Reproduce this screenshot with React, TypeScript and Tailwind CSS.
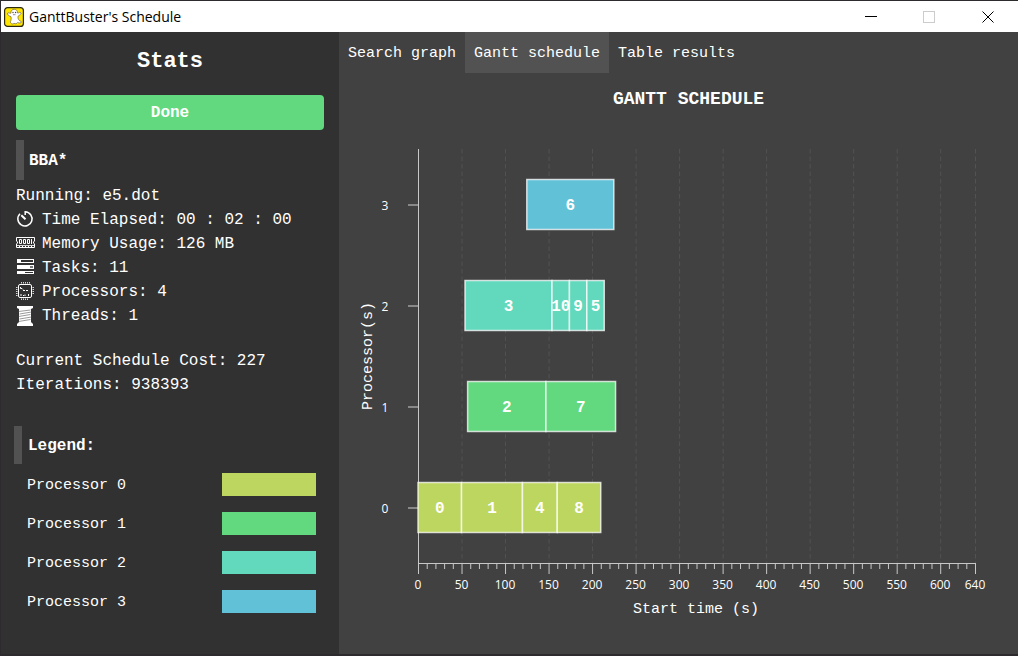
import React from "react";

const processors = [
  { id: 0, fill: "#bdd65f", swatch: "bg-[#bdd65f]" },
  { id: 1, fill: "#62d87f", swatch: "bg-[#62d87f]" },
  { id: 2, fill: "#62d8bc", swatch: "bg-[#62d8bc]" },
  { id: 3, fill: "#61c2d7", swatch: "bg-[#61c2d7]" },
];

const tasks = [
  { id: 0, proc: 0, start: 0, length: 50 },
  { id: 1, proc: 0, start: 50, length: 70 },
  { id: 4, proc: 0, start: 120, length: 40 },
  { id: 8, proc: 0, start: 160, length: 50 },
  { id: 2, proc: 1, start: 57, length: 90 },
  { id: 7, proc: 1, start: 147, length: 80 },
  { id: 3, proc: 2, start: 54, length: 100 },
  { id: 10, proc: 2, start: 154, length: 20 },
  { id: 9, proc: 2, start: 174, length: 20 },
  { id: 5, proc: 2, start: 194, length: 20 },
  { id: 6, proc: 3, start: 125, length: 100 },
];

const LEFT = 79;
const TOP = 33;
const BOTTOM = 447;
const WIDTH = 557;
const MAX = 640;
const scaleX = (t: number) => LEFT + (t / MAX) * WIDTH;
const scaleY = (p: number) => 391 - p * 101;

const major = [0, 50, 100, 150, 200, 250, 300, 350, 400, 450, 500, 550, 600, 640];
const minor = Array.from({ length: 65 }, (_, i) => i * 10).filter((t) => !major.includes(t));

function GhostIcon() {
  return (
    <svg viewBox="0 0 20 20" className="size-5" aria-hidden="true">
      <rect x="0.6" y="0.6" width="18.8" height="18.8" rx="3" fill="#ffe600" stroke="#2c2810" strokeWidth="1.2" />
      <path
        d="M6.8 6.3C6.8 3.7 8.2 2.3 10.2 2.3s3.4 1.4 3.4 3.7c1.1.2 1.7-1 2.8-.6 1.3.6.7 2-2.4 3.9-.1 2 .3 3.2 1.3 4.1.9.8 2.2.7 2.1 1.7-.2 1.2-2.3 1.2-3.7.3-1 1.4-2.4 1.9-3.6.9-1.2 1-2.7.8-3.4-.3-.6-1-.2-1.8.2-2.6.4-1.3.3-2.500.1-3.700C4.600 8.800 3 7.400 3.500 6.200c.6-1.100 2 .2 3.300.1z"
        fill="#ffffff"
        stroke="#7d7140"
        strokeWidth="0.8"
      />
      <circle cx="9" cy="5.5" r="0.7" fill="#444" />
      <circle cx="11.6" cy="5.5" r="0.7" fill="#444" />
      <path d="M9 7.700h2.500" stroke="#777" strokeWidth="0.8" />
    </svg>
  );
}

function TimerIcon() {
  return (
    <svg viewBox="0 0 18 18" className="size-[18px]" fill="none" stroke="white" strokeWidth="1.5">
      <path d="M9.200 5V1.800A7.100 7.100 0 1 1 4 3.800" />
      <path d="M5.300 5.300L9.500 9.300" strokeWidth="2" />
    </svg>
  );
}

function MemoryIcon() {
  return (
    <svg viewBox="0 0 19 18" className="h-[18px] w-[19px]" fill="none" stroke="white">
      <path d="M.5 3.500h18v3.500l-1 1v1l1 1v3.500H.5V10l1-1V8l-1-1z" />
      <path d="M3.500 5.500h2v4h-2zM7.500 5.500h2v4h-2zM11.500 5.500h2v4h-2zM15.500 5v5" />
      <path d="M1 11.500h17" strokeWidth=".8" />
      <path d="M3.500 12v2M6.500 12v2M9.500 12v2M12.500 12v2M15.500 12v2" />
    </svg>
  );
}

function TasksIcon() {
  return (
    <svg viewBox="0 0 18 18" className="size-[18px]">
      <path fill="white" d="M1 1h17v4H1zM1 7h17v4H1zM1 13h17v3H1z" />
      <path fill="#313131" d="M5 2h12v2H5zM9 14h8v1H9z" />
      <path fill="#777" d="M14 8h3v2h-3z" />
    </svg>
  );
}

function ChipIcon() {
  return (
    <svg viewBox="0 0 18 18" className="size-[18px]" fill="none" stroke="white">
      <rect x="2.5" y="2.5" width="13" height="13" rx="1.5" />
      <path d="M5.500 0v1.500M7.500 0v1.500M9.500 0v1.500M11.500 0v1.500M13.500 0v1.500M5.500 16.500V18M7.500 16.500V18M9.500 16.500V18M11.500 16.500V18M0 5.500h1.500M0 7.500h1.500M0 9.500h1.500M0 11.500h1.500M0 13.500h1.500M16.500 5.500H18M16.500 7.500H18M16.500 9.500H18M16.500 11.500H18" strokeWidth=".8" />
      <path d="M4.500 5v1.500H6l1 1M7 8.500h2M10 8.500h2M5 14v-2M7.500 14v-1M9 14v-1.500M12.500 14v-2" />
    </svg>
  );
}

function ThreadIcon() {
  return (
    <svg viewBox="0 0 18 20" className="h-5 w-[18px]">
      <path fill="white" d="M1 0h16v2l-2 1H3L1 2zM3 16h12l2 2v2H1v-2zM3 3h12v14H3z" />
      <path d="M2.500 5.500l12-1.500M3.500 8l12-2M2.500 10.500l12-2M3.500 13l12-2M2.500 15.500l12-2" stroke="#555" strokeWidth=".6" />
    </svg>
  );
}

const stats = [
  { label: "Time Elapsed: 00 : 02 : 00", Icon: TimerIcon },
  { label: "Memory Usage: 126 MB", Icon: MemoryIcon },
  { label: "Tasks: 11", Icon: TasksIcon },
  { label: "Processors: 4", Icon: ChipIcon },
  { label: "Threads: 1", Icon: ThreadIcon },
];

function TitleBar() {
  return (
    <header className="flex h-[31px] shrink-0 items-center bg-white pl-[3px] font-['Open_Sans',sans-serif] text-black">
      <GhostIcon />
      <span className="ml-[5px] grow text-sm">GanttBuster's Schedule</span>
      <button aria-label="Minimize" className="flex h-full w-[58px] items-center justify-center">
        <svg viewBox="0 0 12 12" className="size-3" stroke="black"><path d="M0 5.500h12" /></svg>
      </button>
      <button aria-label="Maximize" disabled className="flex h-full w-[58px] items-center justify-center">
        <svg viewBox="0 0 12 12" className="size-3" fill="none" stroke="#cccccc"><rect x="0.5" y="0.5" width="11" height="11" /></svg>
      </button>
      <button aria-label="Close" className="flex h-full w-[60px] items-center justify-center">
        <svg viewBox="0 0 12 12" className="size-3" stroke="black"><path d="M.5 .500l11 11M11.500 .500l-11 11" /></svg>
      </button>
    </header>
  );
}

function Sidebar() {
  return (
    <aside className="w-[338px] shrink-0 bg-[#313131] px-[15px] pt-[14px]">
      <h1 className="text-center text-[22px] leading-8 font-bold">Stats</h1>
      <button className="mt-[17px] block h-[35px] w-full rounded bg-[#62d87f] text-base font-bold">Done</button>
      <h2 className="mt-[10px] flex h-10 items-center border-l-8 border-[#525252] pt-0.5 pl-[5px] text-base font-bold">BBA*</h2>
      <p className="mt-1 leading-6">Running: e5.dot</p>
      <ul>
        {stats.map(({ label, Icon }) => (
          <li key={label} className="flex h-6 items-center gap-[7px]">
            <span className="flex h-5 w-[19px]" aria-hidden="true"><Icon /></span>
            {label}
          </li>
        ))}
      </ul>
      <p className="mt-[21px] leading-6">Current Schedule Cost: 227</p>
      <p className="leading-6">Iterations: 938393</p>
      <h2 className="-ml-0.5 mt-[29px] flex h-[38px] items-center border-l-8 border-[#525252] pt-0.5 pl-1.5 text-base font-bold">Legend:</h2>
      <ul className="mt-[9px] flex flex-col gap-4 pr-2 pl-[11px] text-[15px]">
        {processors.map((p) => (
          <li key={p.id} className="flex h-[23px] items-center justify-between">
            <span className="pt-1">Processor {p.id}</span>
            <span className={`h-full w-[94px] ${p.swatch}`} />
          </li>
        ))}
      </ul>
    </aside>
  );
}

function GanttChart() {
  return (
    <svg viewBox="0 0 679 505" className="block h-auto w-full" role="img" aria-label="Gantt schedule">
      <g stroke="#525252" strokeDasharray="4.5 3">
        {major.slice(1).map((t) => (
          <line key={t} x1={scaleX(t) + 0.5} x2={scaleX(t) + 0.5} y1={TOP} y2={BOTTOM} />
        ))}
      </g>
      <g stroke="#c8c8c8">
        <path d={`M${LEFT + 0.5} ${TOP}V${BOTTOM + 0.5}H${LEFT + WIDTH + 1}`} fill="none" />
        {major.map((t) => (
          <line key={t} x1={scaleX(t) + 0.5} x2={scaleX(t) + 0.5} y1={BOTTOM} y2={BOTTOM + 11} />
        ))}
        {minor.map((t) => (
          <line key={t} x1={scaleX(t) + 0.5} x2={scaleX(t) + 0.5} y1={BOTTOM} y2={BOTTOM + 6} />
        ))}
      </g>
      <g className="fill-white font-['Open_Sans',sans-serif] text-xs" textAnchor="middle">
        {major.map((t) => (
          <text key={t} x={scaleX(t)} y={BOTTOM + 26}>{t}</text>
        ))}
        {processors.map((p) => (
          <text key={p.id} x={46} y={scaleY(p.id) + 6}>{p.id}</text>
        ))}
      </g>
      {processors.map((p) => (
        <rect key={p.id} x={LEFT - 10} y={scaleY(p.id)} width={10} height={2} fill="#888888" />
      ))}
      <g className="fill-white text-base font-bold" textAnchor="middle">
        {tasks.map((t) => (
          <g key={t.id}>
            <rect
              x={scaleX(t.start)}
              y={scaleY(t.proc) - 24.5}
              width={(t.length / MAX) * WIDTH}
              height={50}
              fill={processors[t.proc].fill}
              stroke="#ffffff"
              strokeOpacity="0.75"
              strokeWidth="1.5"
            />
            <text x={scaleX(t.start + t.length / 2)} y={scaleY(t.proc) + 6}>{t.id}</text>
          </g>
        ))}
      </g>
      <g className="fill-white text-[15px]" textAnchor="middle">
        <text x={357} y={BOTTOM + 50}>Start time (s)</text>
        <text transform="translate(33 240) rotate(-90)">Processor(s)</text>
      </g>
    </svg>
  );
}

function Schedule() {
  return (
    <main className="min-w-0 grow bg-[#414141]">
      <nav className="flex h-[41px] text-[15px]" role="tablist">
        <button role="tab" aria-selected="false" className="px-[9px] pt-1">Search graph</button>
        <button role="tab" aria-selected="true" className="bg-[#525252] px-[9px] pt-1">Gantt schedule</button>
        <button role="tab" aria-selected="false" className="px-[9px] pt-1">Table results</button>
      </nav>
      <h2 className="mt-[10px] mb-px pl-5 text-center text-lg leading-8 font-bold">GANTT SCHEDULE</h2>
      <GanttChart />
    </main>
  );
}

export default function App() {
  return (
    <div className="flex min-h-screen flex-col border-t border-b-2 border-l border-[#2d2b2e] font-['Liberation_Mono',monospace] text-base text-white">
      <TitleBar />
      <div className="flex grow">
        <Sidebar />
        <Schedule />
      </div>
    </div>
  );
}
